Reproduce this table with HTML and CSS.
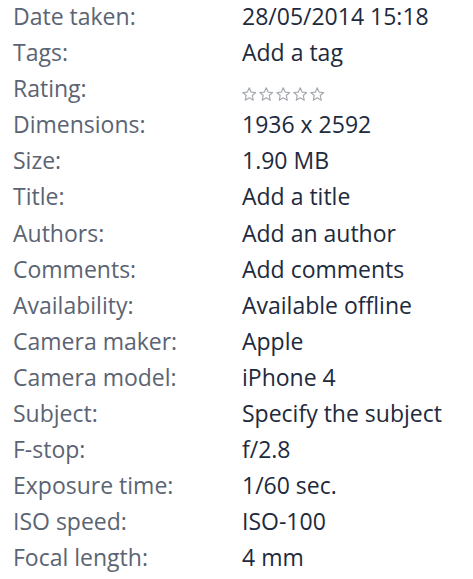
FILE: index.html
```html
<!DOCTYPE html>
<html>
<head>
<meta charset="utf-8">
<link rel="stylesheet" href="styles.css">
</head>
<body>
<div class="props">
  <div class="row"><span class="label">Date taken:</span><span class="value">28/05/2014 15:18</span></div>
  <div class="row"><span class="label">Tags:</span><span class="value">Add a tag</span></div>
  <div class="row"><span class="label">Rating:</span><span class="value stars">
    <svg class="star" viewBox="0 0 14 14"><path d="M7 0.8 L8.8 4.9 L13.2 5.3 L9.9 8.2 L10.9 12.8 L7 10.4 L3.1 12.8 L4.1 8.2 L0.8 5.3 L5.2 4.9 Z"/></svg>
    <svg class="star" viewBox="0 0 14 14"><path d="M7 0.8 L8.8 4.9 L13.2 5.3 L9.9 8.2 L10.9 12.8 L7 10.4 L3.1 12.8 L4.1 8.2 L0.8 5.3 L5.2 4.9 Z"/></svg>
    <svg class="star" viewBox="0 0 14 14"><path d="M7 0.8 L8.8 4.9 L13.2 5.3 L9.9 8.2 L10.9 12.8 L7 10.4 L3.1 12.8 L4.1 8.2 L0.8 5.3 L5.2 4.9 Z"/></svg>
    <svg class="star" viewBox="0 0 14 14"><path d="M7 0.8 L8.8 4.9 L13.2 5.3 L9.9 8.2 L10.9 12.8 L7 10.4 L3.1 12.8 L4.1 8.2 L0.8 5.3 L5.2 4.9 Z"/></svg>
    <svg class="star" viewBox="0 0 14 14"><path d="M7 0.8 L8.8 4.9 L13.2 5.3 L9.9 8.2 L10.9 12.8 L7 10.4 L3.1 12.8 L4.1 8.2 L0.8 5.3 L5.2 4.9 Z"/></svg>
  </span></div>
  <div class="row"><span class="label">Dimensions:</span><span class="value">1936 x 2592</span></div>
  <div class="row"><span class="label">Size:</span><span class="value">1.90 MB</span></div>
  <div class="row"><span class="label">Title:</span><span class="value">Add a title</span></div>
  <div class="row"><span class="label">Authors:</span><span class="value">Add an author</span></div>
  <div class="row"><span class="label">Comments:</span><span class="value">Add comments</span></div>
  <div class="row"><span class="label">Availability:</span><span class="value">Available offline</span></div>
  <div class="row"><span class="label">Camera maker:</span><span class="value">Apple</span></div>
  <div class="row"><span class="label">Camera model:</span><span class="value">iPhone 4</span></div>
  <div class="row"><span class="label">Subject:</span><span class="value">Specify the subject</span></div>
  <div class="row"><span class="label">F-stop:</span><span class="value">f/2.8</span></div>
  <div class="row"><span class="label">Exposure time:</span><span class="value">1/60 sec.</span></div>
  <div class="row"><span class="label">ISO speed:</span><span class="value">ISO-100</span></div>
  <div class="row"><span class="label">Focal length:</span><span class="value">4 mm</span></div>
</div>
</body>
</html>
```
FILE: styles.css
```css
html, body {
  margin: 0;
  padding: 0;
  background: #ffffff;
}
body {
  font-family: "Open Sans", "Noto Sans", sans-serif;
  font-size: 23px;
}
.props {
  display: flex;
  flex-direction: column;
  padding: 0 0 0 13px;
}
.row {
  display: grid;
  grid-template-columns: 229px auto;
  height: 36.1px;
  line-height: 32px;
  white-space: nowrap;
}
.label {
  color: #5b6473;
}
.value {
  color: #1e2a3d;
}
.stars {
  display: flex;
  align-items: flex-start;
  gap: 2.5px;
  padding-top: 15px;
  padding-left: 0;
}
.star {
  width: 14.5px;
  height: 14.5px;
  fill: none;
  stroke: #a4a8ae;
  stroke-width: 1.1;
  stroke-linejoin: round;
}
```
